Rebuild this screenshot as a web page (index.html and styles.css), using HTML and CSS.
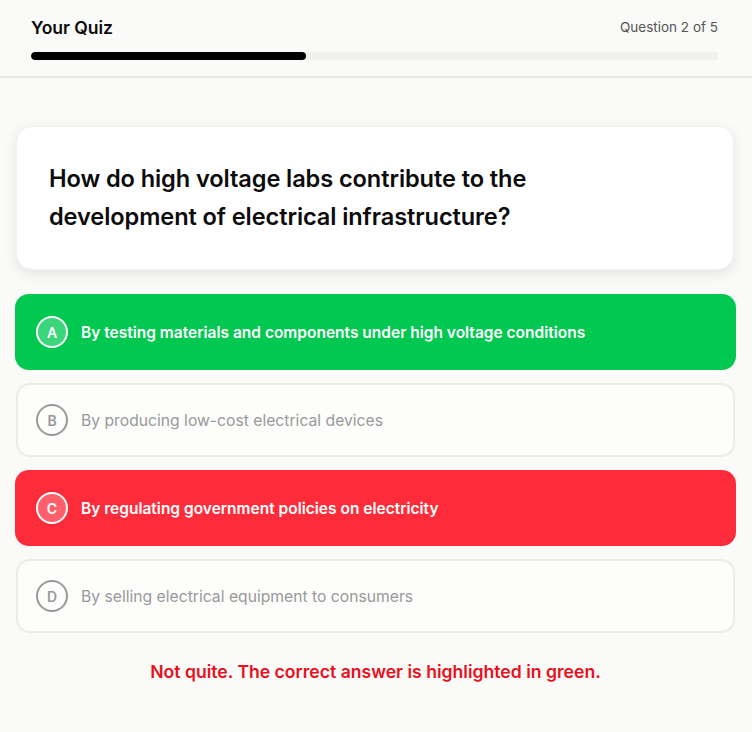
FILE: index.html
```html
<!DOCTYPE html>
<html>
<head>
<meta charset="utf-8">
<link rel="stylesheet" href="styles.css">
</head>
<body>
<header class="top">
  <div class="top-row">
    <h1 class="title">Your Quiz</h1>
    <span class="count">Question 2 of 5</span>
  </div>
  <div class="track"><div class="fill" style="width:40%"></div></div>
</header>
<main class="main">
  <section class="question">
    <h2>How do high voltage labs contribute to the development of electrical infrastructure?</h2>
  </section>
  <div class="options">
    <div class="option correct"><span class="badge">A</span><span class="label">By testing materials and components under high voltage conditions</span></div>
    <div class="option"><span class="badge">B</span><span class="label">By producing low-cost electrical devices</span></div>
    <div class="option wrong"><span class="badge">C</span><span class="label">By regulating government policies on electricity</span></div>
    <div class="option"><span class="badge">D</span><span class="label">By selling electrical equipment to consumers</span></div>
  </div>
  <p class="feedback">Not quite. The correct answer is highlighted in green.</p>
</main>
</body>
</html>
```

FILE: styles.css
```css
* { box-sizing: border-box; }
html, body { margin: 0; padding: 0; }
body {
  background: #fafaf9;
  font-family: Inter, "Noto Sans", sans-serif;
  color: #0c0c0c;
  width: 752px;
  min-height: 732px;
}
.top {
  padding: 15px 34px 16px 31px;
  border-bottom: 2px solid #e8e8e6;
  background: #fafaf9;
}
.top-row {
  display: flex;
  justify-content: space-between;
  align-items: center;
  height: 24px;
}
.title {
  margin: 0;
  font-size: 17.6px;
  font-weight: 600;
  letter-spacing: -0.1px;
}
.count {
  font-size: 13.5px;
  color: #555;
}
.track {
  margin-top: 13px;
  height: 8px;
  border-radius: 4px;
  background: #f0f0ef;
  overflow: hidden;
}
.fill {
  height: 100%;
  background: #000;
  border-radius: 4px;
}
.main {
  padding: 48px 16px 0 15px;
}
.question {
  margin-left: 1px;
  margin-right: 2px;
  background: #fff;
  border-radius: 16px;
  box-shadow: 0 4px 14px rgba(0,0,0,0.09);
  border: 1px solid #f1f1f0;
  padding: 33px 150px 33px 32px;
}
.question h2 {
  margin: 0;
  font-size: 23.6px;
  line-height: 38px;
  font-weight: 600;
  letter-spacing: -0.1px;
}
.options {
  margin-top: 24px;
  display: flex;
  flex-direction: column;
  gap: 13px;
}
.option {
  display: flex;
  align-items: center;
  gap: 13px;
  height: 74px;
  padding: 0 18px;
  border-radius: 14px;
  background: #fdfdfc;
  border: 2px solid #ececeb;
  color: #999;
  font-size: 15.7px;
  font-weight: 400;
  margin: 0 1px;
}
.option.correct,
.option.wrong {
  height: 76px;
  border: none;
  color: #fff;
  font-weight: 600;
  padding-left: 21px;
  margin: 0;
  font-size: 15.5px;
}
.option.correct { background: #00c850; }
.option.wrong { background: #fe2c3a; }
.badge {
  flex: none;
  width: 32px;
  height: 32px;
  border-radius: 50%;
  border: 2px solid #999;
  display: flex;
  align-items: center;
  justify-content: center;
  font-size: 14px;
  font-weight: 600;
  color: #999;
}
.correct .badge {
  border-color: #fff;
  background: #3bd57c;
  color: #fff;
}
.wrong .badge {
  border-color: #fff;
  background: #fe5f6a;
  color: #fff;
}
.feedback {
  margin: 28px 0 0;
  text-align: center;
  color: #e8101c;
  font-size: 17.6px;
  font-weight: 600;
}
```
